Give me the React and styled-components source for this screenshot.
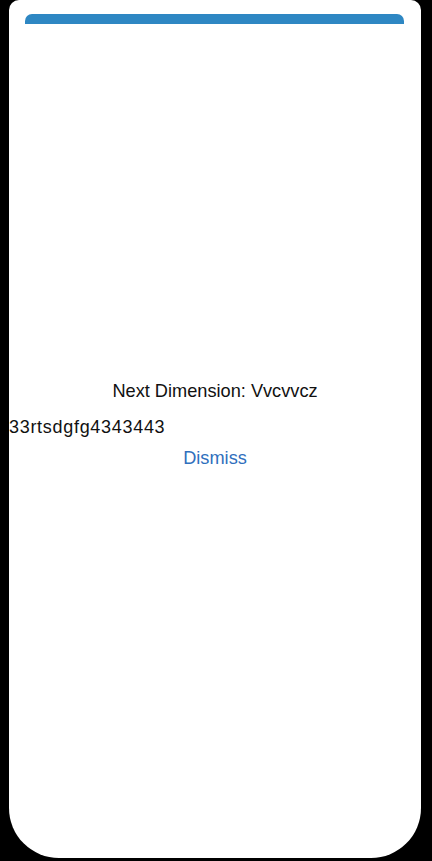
import React from "react";
import styled, { createGlobalStyle } from "styled-components";

const Global = createGlobalStyle`
  html, body { margin: 0; padding: 0; background: #000; }
  body { font-family: "Liberation Sans", Arial, sans-serif; }
`;

const Screen = styled.div`
  width: 432px;
  height: 861px;
  background: #000;
  display: flex;
  justify-content: flex-start;
  overflow: hidden;
`;

const Card = styled.div`
  margin-left: 9px;
  width: 412px;
  height: 858px;
  background: #fff;
  border-radius: 10px 10px 50px 50px;
  display: flex;
  flex-direction: column;
`;

const TopBar = styled.div`
  margin: 14px 17px 0 16px;
  height: 10px;
  background: #2e87c3;
  border-radius: 7px 7px 0 0;
`;

const Body = styled.div`
  flex: 1;
  display: flex;
  flex-direction: column;
  justify-content: center;
  padding-bottom: 34px;
`;

const Title = styled.div`
  font-size: 18.2px;
  color: #111;
  text-align: center;
  line-height: 22px;
`;

const Detail = styled.div`
  font-size: 18px;
  letter-spacing: 0.7px;
  color: #111;
  text-align: left;
  line-height: 22px;
  margin-top: 14px;
`;

const Dismiss = styled.button`
  align-self: center;
  background: none;
  border: none;
  padding: 0;
  margin-top: 9px;
  font-family: inherit;
  font-size: 18.2px;
  line-height: 22px;
  color: #2f6fbd;
  cursor: pointer;
`;

export default function App() {
  return (
    <>
      <Global />
      <Screen>
        <Card>
          <TopBar />
          <Body>
            <Title>Next Dimension: Vvcvvcz</Title>
            <Detail>33rtsdgfg4343443</Detail>
            <Dismiss>Dismiss</Dismiss>
          </Body>
        </Card>
      </Screen>
    </>
  );
}
